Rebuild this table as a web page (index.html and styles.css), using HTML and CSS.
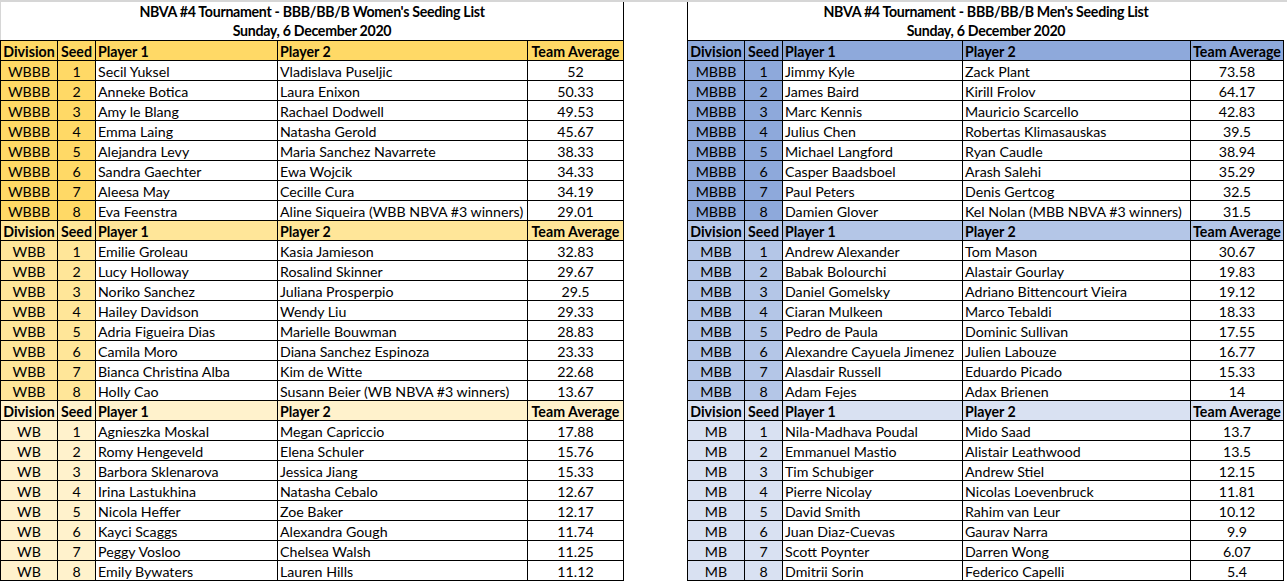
FILE: index.html
```html
<!DOCTYPE html>
<html>
<head>
<meta charset="utf-8">
<link rel="stylesheet" href="styles.css">
</head>
<body>
<div class="page">
  <section class="sheet women">
    <div class="title">
      <div class="tline first">NBVA #4 Tournament - BBB/BB/B Women's Seeding List</div>
      <div class="tline second">Sunday, 6 December 2020</div>
    </div>
    <div class="grid">
      <div class="row head w1"><div>Division</div><div class="ctr">Seed</div><div class="name">Player 1</div><div class="name">Player 2</div><div class="ctr">Team Average</div></div>
      <div class="row w1"><div class="k">WBBB</div><div class="k">1</div><div class="name">Secil Yuksel</div><div class="name">Vladislava Puseljic</div><div class="ctr">52</div></div>
      <div class="row w1"><div class="k">WBBB</div><div class="k">2</div><div class="name">Anneke Botica</div><div class="name">Laura Enixon</div><div class="ctr">50.33</div></div>
      <div class="row w1"><div class="k">WBBB</div><div class="k">3</div><div class="name">Amy le Blang</div><div class="name">Rachael Dodwell</div><div class="ctr">49.53</div></div>
      <div class="row w1"><div class="k">WBBB</div><div class="k">4</div><div class="name">Emma Laing</div><div class="name">Natasha Gerold</div><div class="ctr">45.67</div></div>
      <div class="row w1"><div class="k">WBBB</div><div class="k">5</div><div class="name">Alejandra Levy</div><div class="name">Maria Sanchez Navarrete</div><div class="ctr">38.33</div></div>
      <div class="row w1"><div class="k">WBBB</div><div class="k">6</div><div class="name">Sandra Gaechter</div><div class="name">Ewa Wojcik</div><div class="ctr">34.33</div></div>
      <div class="row w1"><div class="k">WBBB</div><div class="k">7</div><div class="name">Aleesa May</div><div class="name">Cecille Cura</div><div class="ctr">34.19</div></div>
      <div class="row w1"><div class="k">WBBB</div><div class="k">8</div><div class="name">Eva Feenstra</div><div class="name">Aline Siqueira (WBB NBVA #3 winners)</div><div class="ctr">29.01</div></div>

      <div class="row head w2"><div>Division</div><div class="ctr">Seed</div><div class="name">Player 1</div><div class="name">Player 2</div><div class="ctr">Team Average</div></div>
      <div class="row w2"><div class="k">WBB</div><div class="k">1</div><div class="name">Emilie Groleau</div><div class="name">Kasia Jamieson</div><div class="ctr">32.83</div></div>
      <div class="row w2"><div class="k">WBB</div><div class="k">2</div><div class="name">Lucy Holloway</div><div class="name">Rosalind Skinner</div><div class="ctr">29.67</div></div>
      <div class="row w2"><div class="k">WBB</div><div class="k">3</div><div class="name">Noriko Sanchez</div><div class="name">Juliana Prosperpio</div><div class="ctr">29.5</div></div>
      <div class="row w2"><div class="k">WBB</div><div class="k">4</div><div class="name">Hailey Davidson</div><div class="name">Wendy Liu</div><div class="ctr">29.33</div></div>
      <div class="row w2"><div class="k">WBB</div><div class="k">5</div><div class="name">Adria Figueira Dias</div><div class="name">Marielle Bouwman</div><div class="ctr">28.83</div></div>
      <div class="row w2"><div class="k">WBB</div><div class="k">6</div><div class="name">Camila Moro</div><div class="name">Diana Sanchez Espinoza</div><div class="ctr">23.33</div></div>
      <div class="row w2"><div class="k">WBB</div><div class="k">7</div><div class="name">Bianca Christina Alba</div><div class="name">Kim de Witte</div><div class="ctr">22.68</div></div>
      <div class="row w2"><div class="k">WBB</div><div class="k">8</div><div class="name">Holly Cao</div><div class="name">Susann Beier (WB NBVA #3 winners)</div><div class="ctr">13.67</div></div>

      <div class="row head w3"><div>Division</div><div class="ctr">Seed</div><div class="name">Player 1</div><div class="name">Player 2</div><div class="ctr">Team Average</div></div>
      <div class="row w3"><div class="k">WB</div><div class="k">1</div><div class="name">Agnieszka Moskal</div><div class="name">Megan Capriccio</div><div class="ctr">17.88</div></div>
      <div class="row w3"><div class="k">WB</div><div class="k">2</div><div class="name">Romy Hengeveld</div><div class="name">Elena Schuler</div><div class="ctr">15.76</div></div>
      <div class="row w3"><div class="k">WB</div><div class="k">3</div><div class="name">Barbora Sklenarova</div><div class="name">Jessica Jiang</div><div class="ctr">15.33</div></div>
      <div class="row w3"><div class="k">WB</div><div class="k">4</div><div class="name">Irina Lastukhina</div><div class="name">Natasha Cebalo</div><div class="ctr">12.67</div></div>
      <div class="row w3"><div class="k">WB</div><div class="k">5</div><div class="name">Nicola Heffer</div><div class="name">Zoe Baker</div><div class="ctr">12.17</div></div>
      <div class="row w3"><div class="k">WB</div><div class="k">6</div><div class="name">Kayci Scaggs</div><div class="name">Alexandra Gough</div><div class="ctr">11.74</div></div>
      <div class="row w3"><div class="k">WB</div><div class="k">7</div><div class="name">Peggy Vosloo</div><div class="name">Chelsea Walsh</div><div class="ctr">11.25</div></div>
      <div class="row w3"><div class="k">WB</div><div class="k">8</div><div class="name">Emily Bywaters</div><div class="name">Lauren Hills</div><div class="ctr">11.12</div></div>
    </div>
  </section>

  <section class="sheet men">
    <div class="title">
      <div class="tline first">NBVA #4 Tournament - BBB/BB/B Men's Seeding List</div>
      <div class="tline second">Sunday, 6 December 2020</div>
    </div>
    <div class="grid">
      <div class="row head m1"><div>Division</div><div class="ctr">Seed</div><div class="name">Player 1</div><div class="name">Player 2</div><div class="ctr">Team Average</div></div>
      <div class="row m1"><div class="k">MBBB</div><div class="k">1</div><div class="name">Jimmy Kyle</div><div class="name">Zack Plant</div><div class="ctr">73.58</div></div>
      <div class="row m1"><div class="k">MBBB</div><div class="k">2</div><div class="name">James Baird</div><div class="name">Kirill Frolov</div><div class="ctr">64.17</div></div>
      <div class="row m1"><div class="k">MBBB</div><div class="k">3</div><div class="name">Marc Kennis</div><div class="name">Mauricio Scarcello</div><div class="ctr">42.83</div></div>
      <div class="row m1"><div class="k">MBBB</div><div class="k">4</div><div class="name">Julius Chen</div><div class="name">Robertas Klimasauskas</div><div class="ctr">39.5</div></div>
      <div class="row m1"><div class="k">MBBB</div><div class="k">5</div><div class="name">Michael Langford</div><div class="name">Ryan Caudle</div><div class="ctr">38.94</div></div>
      <div class="row m1"><div class="k">MBBB</div><div class="k">6</div><div class="name">Casper Baadsboel</div><div class="name">Arash Salehi</div><div class="ctr">35.29</div></div>
      <div class="row m1"><div class="k">MBBB</div><div class="k">7</div><div class="name">Paul Peters</div><div class="name">Denis Gertcog</div><div class="ctr">32.5</div></div>
      <div class="row m1"><div class="k">MBBB</div><div class="k">8</div><div class="name">Damien Glover</div><div class="name">Kel Nolan (MBB NBVA #3 winners)</div><div class="ctr">31.5</div></div>

      <div class="row head m2"><div>Division</div><div class="ctr">Seed</div><div class="name">Player 1</div><div class="name">Player 2</div><div class="ctr">Team Average</div></div>
      <div class="row m2"><div class="k">MBB</div><div class="k">1</div><div class="name">Andrew Alexander</div><div class="name">Tom Mason</div><div class="ctr">30.67</div></div>
      <div class="row m2"><div class="k">MBB</div><div class="k">2</div><div class="name">Babak Bolourchi</div><div class="name">Alastair Gourlay</div><div class="ctr">19.83</div></div>
      <div class="row m2"><div class="k">MBB</div><div class="k">3</div><div class="name">Daniel Gomelsky</div><div class="name">Adriano Bittencourt Vieira</div><div class="ctr">19.12</div></div>
      <div class="row m2"><div class="k">MBB</div><div class="k">4</div><div class="name">Ciaran Mulkeen</div><div class="name">Marco Tebaldi</div><div class="ctr">18.33</div></div>
      <div class="row m2"><div class="k">MBB</div><div class="k">5</div><div class="name">Pedro de Paula</div><div class="name">Dominic Sullivan</div><div class="ctr">17.55</div></div>
      <div class="row m2"><div class="k">MBB</div><div class="k">6</div><div class="name">Alexandre Cayuela Jimenez</div><div class="name">Julien Labouze</div><div class="ctr">16.77</div></div>
      <div class="row m2"><div class="k">MBB</div><div class="k">7</div><div class="name">Alasdair Russell</div><div class="name">Eduardo Picado</div><div class="ctr">15.33</div></div>
      <div class="row m2"><div class="k">MBB</div><div class="k">8</div><div class="name">Adam Fejes</div><div class="name">Adax Brienen</div><div class="ctr">14</div></div>

      <div class="row head m3"><div>Division</div><div class="ctr">Seed</div><div class="name">Player 1</div><div class="name">Player 2</div><div class="ctr">Team Average</div></div>
      <div class="row m3"><div class="k">MB</div><div class="k">1</div><div class="name">Nila-Madhava Poudal</div><div class="name">Mido Saad</div><div class="ctr">13.7</div></div>
      <div class="row m3"><div class="k">MB</div><div class="k">2</div><div class="name">Emmanuel Mastio</div><div class="name">Alistair Leathwood</div><div class="ctr">13.5</div></div>
      <div class="row m3"><div class="k">MB</div><div class="k">3</div><div class="name">Tim Schubiger</div><div class="name">Andrew Stiel</div><div class="ctr">12.15</div></div>
      <div class="row m3"><div class="k">MB</div><div class="k">4</div><div class="name">Pierre Nicolay</div><div class="name">Nicolas Loevenbruck</div><div class="ctr">11.81</div></div>
      <div class="row m3"><div class="k">MB</div><div class="k">5</div><div class="name">David Smith</div><div class="name">Rahim van Leur</div><div class="ctr">10.12</div></div>
      <div class="row m3"><div class="k">MB</div><div class="k">6</div><div class="name">Juan Diaz-Cuevas</div><div class="name">Gaurav Narra</div><div class="ctr">9.9</div></div>
      <div class="row m3"><div class="k">MB</div><div class="k">7</div><div class="name">Scott Poynter</div><div class="name">Darren Wong</div><div class="ctr">6.07</div></div>
      <div class="row m3"><div class="k">MB</div><div class="k">8</div><div class="name">Dmitrii Sorin</div><div class="name">Federico Capelli</div><div class="ctr">5.4</div></div>
    </div>
  </section>
</div>
</body>
</html>
```

FILE: styles.css
```css
html, body {
  margin: 0;
  padding: 0;
  background: #ffffff;
}

body {
  font-family: Lato, "Open Sans", "Liberation Sans", sans-serif;
  font-size: 14.2px;
  color: #000000;
}

.page {
  display: flex;
  width: 1287px;
  height: 579px;
  border-top: 2px solid #d6d6d6;
  overflow: hidden;
}

.sheet {
  display: flex;
  flex-direction: column;
}

.women {
  width: 624px;
}

.men {
  width: 597px;
  margin-left: 63px;
}

.title {
  height: 38px;
  display: flex;
  flex-direction: column;
  font-weight: bold;
  text-align: center;
  letter-spacing: -0.3px;
}

.women .title {
  border-left: 1px solid #d6d6d6;
  border-right: 1px solid #000;
}

.men .title {
  border-left: 1px solid #000;
}

.tline {
  white-space: nowrap;
  overflow: hidden;
}

.tline.first {
  height: 18px;
  line-height: 19px;
}

.tline.second {
  height: 20px;
  line-height: 22px;
}

.grid {
  display: grid;
  gap: 1px;
  padding: 1px;
  background: #000;
  grid-auto-rows: 19px;
}

.women .grid {
  grid-template-columns: 56px 37px 181px 249px 95px;
}

.men .grid {
  grid-template-columns: 56px 37px 179px 227px 92px;
}

.row {
  display: contents;
}

.row > div {
  background: #ffffff;
  line-height: 21px;
  height: 19px;
  white-space: nowrap;
  overflow: hidden;
  text-align: center;
}

.row > .name {
  text-align: left;
  padding-left: 2px;
}

.row.head > div {
  font-weight: bold;
}

.w1 > .k, .w1.head > div { background: #ffd966; }
.w2 > .k, .w2.head > div { background: #ffe699; }
.w3 > .k, .w3.head > div { background: #fff2cc; }
.m1 > .k, .m1.head > div { background: #8ea9db; }
.m2 > .k, .m2.head > div { background: #b4c6e7; }
.m3 > .k, .m3.head > div { background: #d9e1f2; }
```
